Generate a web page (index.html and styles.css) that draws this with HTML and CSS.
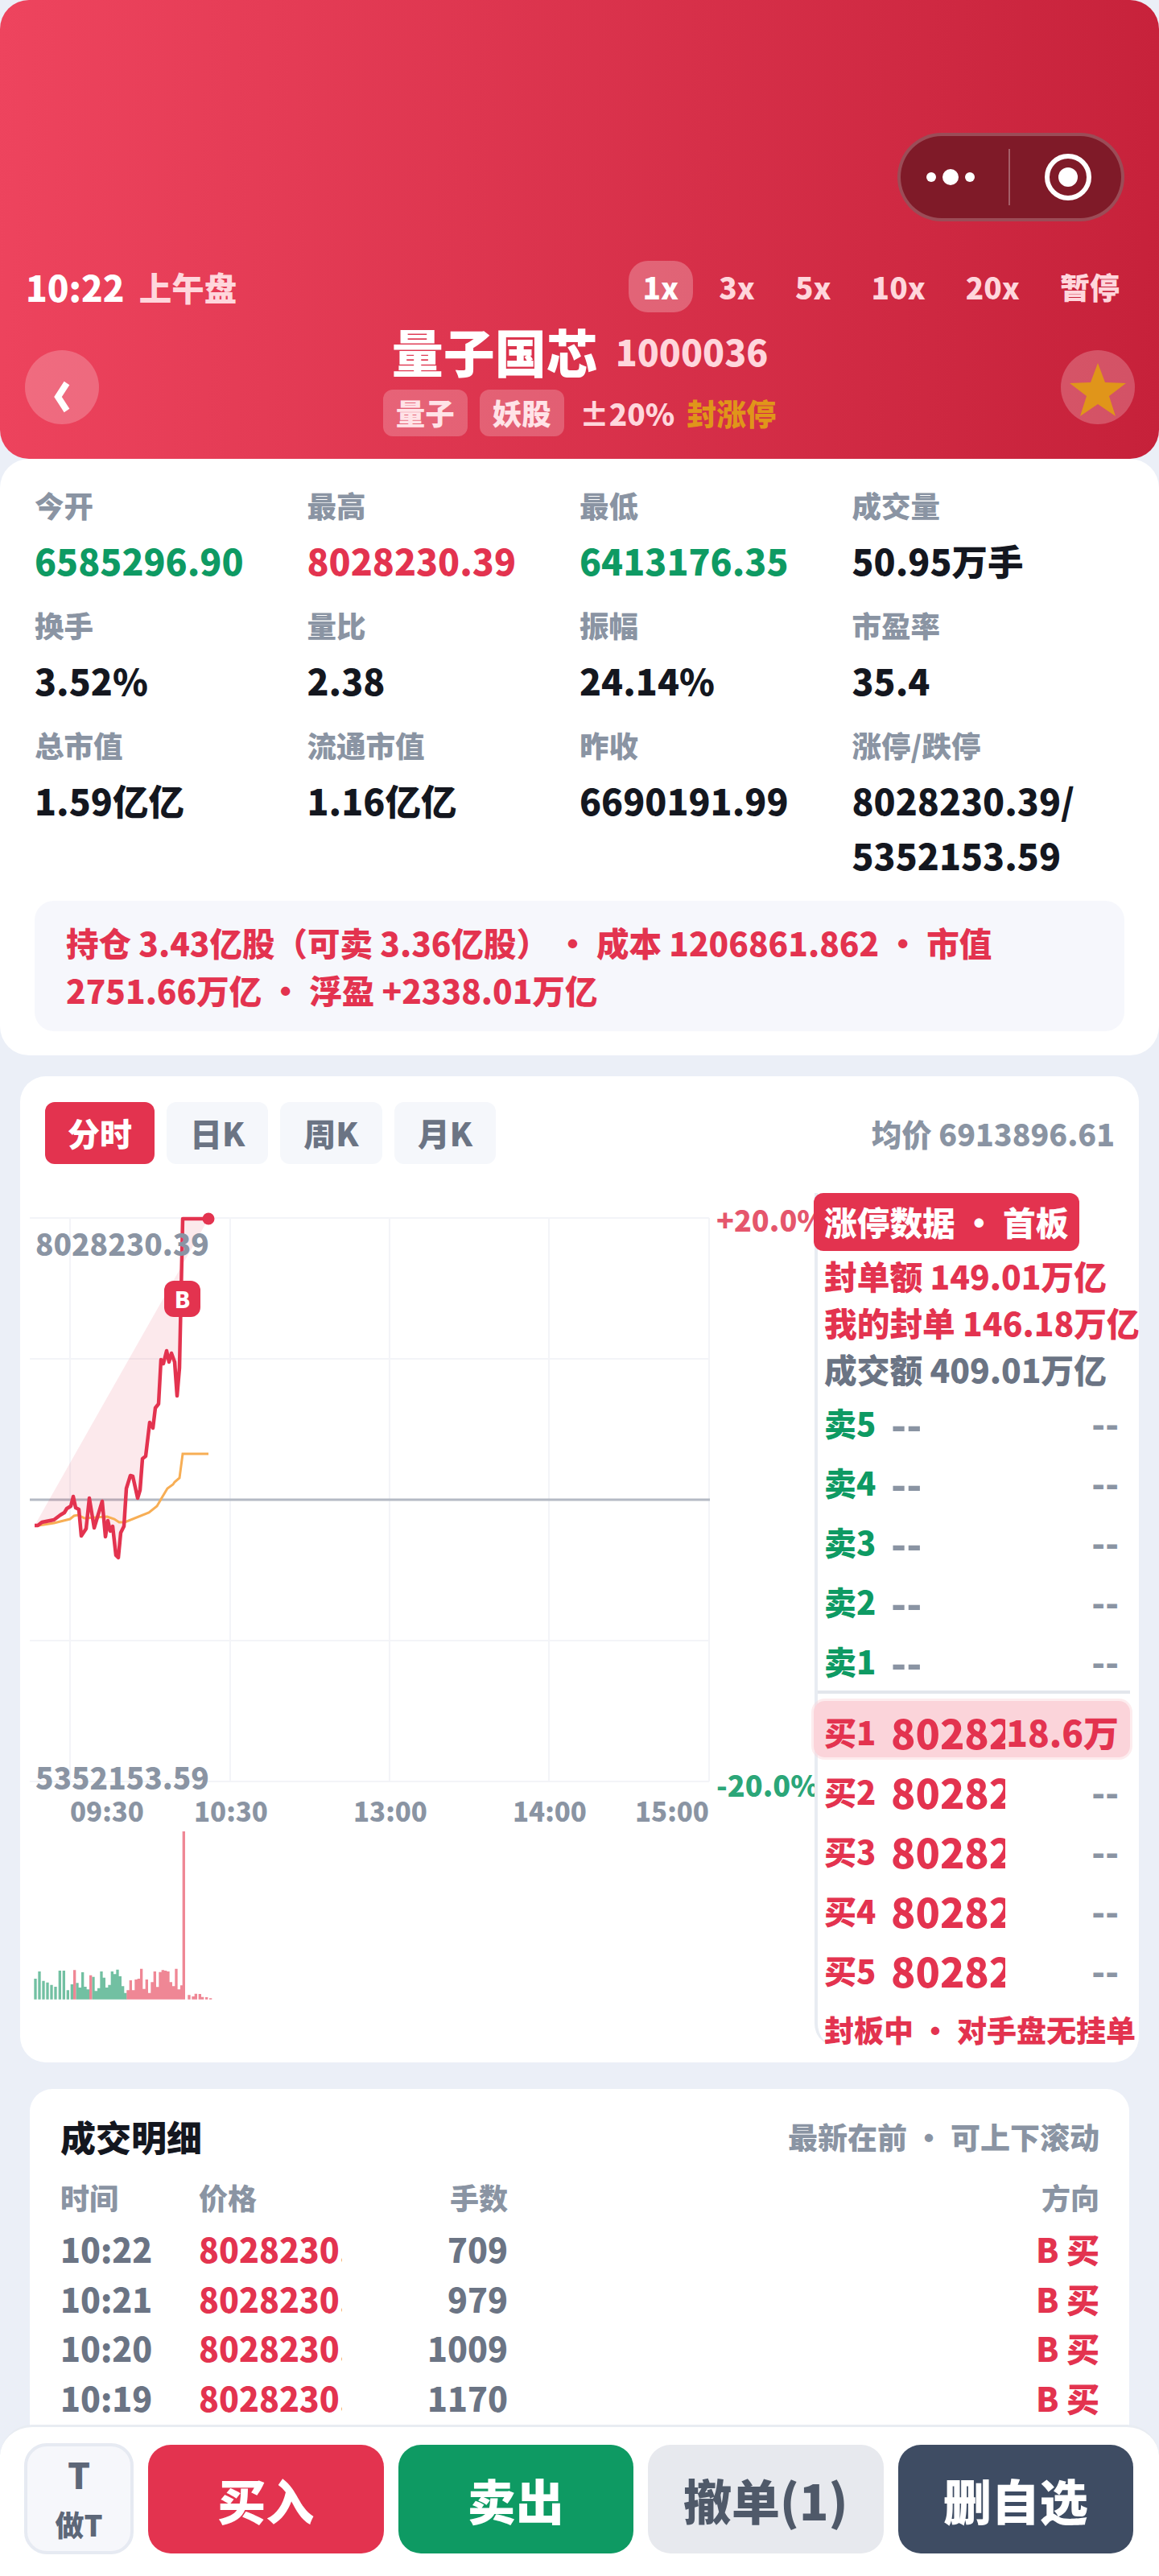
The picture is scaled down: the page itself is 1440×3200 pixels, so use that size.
FILE: index.html
```html
<!DOCTYPE html>
<html lang="zh-CN">
<head>
  <meta charset="UTF-8" />
  <title>量子国芯 1000036</title>
  <link rel="stylesheet" href="styles.css">
</head>
<body>
  <header class="top">
    <div class="capsule">
      <svg class="capsule-dots" width="60" height="24" viewBox="0 0 60 24"><circle cx="6" cy="12" r="6"/><circle cx="30" cy="12" r="10"/><circle cx="54" cy="12" r="6"/></svg>
      <span class="capsule-line"></span>
      <svg class="capsule-ring" width="60" height="60" viewBox="0 0 60 60"><circle class="ring" cx="30" cy="30" r="26"/><circle cx="30" cy="30" r="12"/></svg>
    </div>

    <div class="clock-row">
      <div class="clock"><span class="clock-time">10:22</span><span class="clock-name">上午盘</span></div>
      <div class="speeds">
        <span class="speed active">1x</span>
        <span class="speed">3x</span>
        <span class="speed">5x</span>
        <span class="speed">10x</span>
        <span class="speed">20x</span>
        <span class="speed">暂停</span>
      </div>
    </div>

    <div class="name-row">
      <div class="round-btn back">
        <svg width="30" height="44" viewBox="0 0 30 44"><polyline points="21,5 10,22 21,39"/></svg>
      </div>
      <div class="name-block">
        <div class="name-line"><span class="stock-name">量子国芯</span><span class="stock-code">1000036</span></div>
        <div class="tag-line">
          <span class="tag">量子</span>
          <span class="tag">妖股</span>
          <span class="limit">±20%</span>
          <span class="sealed">封涨停</span>
        </div>
      </div>
      <div class="round-btn fav">
        <svg width="72" height="68" viewBox="0 0 72 68"><polygon points="36,1 45,25 71,26 50,42 58,67 36,52 14,67 22,42 1,26 27,25"/></svg>
      </div>
    </div>
  </header>

  <section class="stats">
    <div class="stat-grid">
      <div><div class="stat-label">今开</div><div class="stat-value green">6585296.90</div></div>
      <div><div class="stat-label">最高</div><div class="stat-value red">8028230.39</div></div>
      <div><div class="stat-label">最低</div><div class="stat-value green">6413176.35</div></div>
      <div><div class="stat-label">成交量</div><div class="stat-value">50.95万手</div></div>
      <div><div class="stat-label">换手</div><div class="stat-value">3.52%</div></div>
      <div><div class="stat-label">量比</div><div class="stat-value">2.38</div></div>
      <div><div class="stat-label">振幅</div><div class="stat-value">24.14%</div></div>
      <div><div class="stat-label">市盈率</div><div class="stat-value">35.4</div></div>
      <div><div class="stat-label">总市值</div><div class="stat-value">1.59亿亿</div></div>
      <div><div class="stat-label">流通市值</div><div class="stat-value">1.16亿亿</div></div>
      <div><div class="stat-label">昨收</div><div class="stat-value">6690191.99</div></div>
      <div><div class="stat-label">涨停/跌停</div><div class="stat-value">8028230.39/<br>5352153.59</div></div>
    </div>
    <div class="position">持仓 3.43亿股（可卖 3.36亿股） · 成本 1206861.862 · 市值 2751.66万亿 · 浮盈 +2338.01万亿</div>
  </section>

  <section class="chart-card">
    <div class="tabs-row">
      <div class="tabs">
        <span class="tab active">分时</span>
        <span class="tab">日K</span>
        <span class="tab">周K</span>
        <span class="tab">月K</span>
      </div>
      <span class="avg-price">均价 6913896.61</span>
    </div>

    <div class="chart-body">
      <div class="chart-left">
        <!-- viewBox uses page pixels so the points read off the screen stay as they are -->
        <svg class="plot" width="975" height="1060" viewBox="37 1483 975 1060">
          <g class="grid">
            <path d="M37 1514H881M37 1689H881M37 2039H881M37 2214H881"/>
            <path d="M87 1514V2214M286 1514V2214M484 1514V2214M682 1514V2214M881 1514V2214"/>
          </g>
          <path class="mid" d="M37 1864H882"/>
          <polygon class="area" points="43,1896 47,1896 52,1892 67,1889 75,1883 80,1880 83,1875 88,1872 91,1860 94,1874 98,1876 101,1909 107,1900 111,1862 117,1899 127,1866 131,1910 134,1890 137,1903 140,1897 144,1933 147,1936 150,1905 154,1897 157,1850 162,1834 165,1835 171,1862 174,1852 177,1813 181,1810 186,1768 190,1775 193,1750 197,1745 200,1690 203,1695 207,1679 210,1693 213,1682 217,1693 220,1735 223,1700 227,1515 259,1515"/>
          <polyline class="avg" points="48,1896 67,1893 87,1888 92,1884 97,1883 105,1887 133,1885 142,1888 148,1892 155,1892 185,1880 195,1872 202,1860 208,1850 215,1845 217,1842 223,1837 227,1807 259,1807"/>
          <polyline class="price" points="43,1896 47,1896 52,1892 67,1889 75,1883 80,1880 83,1875 88,1872 91,1860 94,1874 98,1876 101,1909 107,1900 111,1862 117,1899 127,1866 131,1910 134,1890 137,1903 140,1897 144,1933 147,1936 150,1905 154,1897 157,1850 162,1834 165,1835 171,1862 174,1852 177,1813 181,1810 186,1768 190,1775 193,1750 197,1745 200,1690 203,1695 207,1679 210,1693 213,1682 217,1693 220,1735 223,1700 227,1515 259,1515"/>
          <circle class="dot" cx="259" cy="1515" r="7.5"/>
          <g class="vol" transform="translate(35 2420) scale(.3333)">
            <path class="vol-down" d="M27 194V117M42 194V90M57 194V125M72 194V131M87 194V140M102 194V147M118 194V87M133 194V87M148 194V160M163 194V138M183 194V133M193 194V150M203 194V93M213 194V147M223 194V157M243 194V110M253 194V163M263 194V152M273 194V90M283 194V113M293 194V150M303 194V140M313 194V90M323 194V100M333 194V83M343 194V108M353 194V145M363 194V170"/>
            <path class="vol-up" d="M173 194V85M233 194V104M372 194V160M382 194V123M392 194V160M402 194V120M412 194V117M422 194V80M432 194V155M442 194V120M452 194V170M462 194V130M472 194V90M482 194V148M492 194V92M502 194V85M512 194V87M522 194V90M532 194V130M542 194V145M552 194V80M562 194V157M572 194V142M580 194V-432M600 194V178M615 194V183M625 194V173M640 194V174M650 194V185M665 194V186M680 194V190"/>
          </g>
        </svg>
        <span class="marker">B</span>
        <span class="axis-price high">8028230.39</span>
        <span class="axis-price low">5352153.59</span>
        <span class="axis-pct up">+20.0%</span>
        <span class="axis-pct down">-20.0%</span>
        <span class="axis-time t1">09:30</span>
        <span class="axis-time t2">10:30</span>
        <span class="axis-time t3">13:00</span>
        <span class="axis-time t4">14:00</span>
        <span class="axis-time t5">15:00</span>
      </div>

      <div class="book">
        <div class="book-badge">涨停数据 · 首板</div>
        <div class="book-line red">封单额 149.01万亿</div>
        <div class="book-line red">我的封单 146.18万亿</div>
        <div class="book-line gray">成交额 409.01万亿</div>

        <div class="level"><span class="level-name green">卖5</span><span class="level-price dash">--</span><span class="level-qty dash">--</span></div>
        <div class="level"><span class="level-name green">卖4</span><span class="level-price dash">--</span><span class="level-qty dash">--</span></div>
        <div class="level"><span class="level-name green">卖3</span><span class="level-price dash">--</span><span class="level-qty dash">--</span></div>
        <div class="level"><span class="level-name green">卖2</span><span class="level-price dash">--</span><span class="level-qty dash">--</span></div>
        <div class="level"><span class="level-name green">卖1</span><span class="level-price dash">--</span><span class="level-qty dash">--</span></div>
        <div class="book-divider"></div>
        <div class="level first"><span class="level-name red">买1</span><span class="level-price red">8028230.39</span><span class="level-qty red">18.6万</span></div>
        <div class="level"><span class="level-name red">买2</span><span class="level-price red">8028230.39</span><span class="level-qty dash">--</span></div>
        <div class="level"><span class="level-name red">买3</span><span class="level-price red">8028230.39</span><span class="level-qty dash">--</span></div>
        <div class="level"><span class="level-name red">买4</span><span class="level-price red">8028230.39</span><span class="level-qty dash">--</span></div>
        <div class="level"><span class="level-name red">买5</span><span class="level-price red">8028230.39</span><span class="level-qty dash">--</span></div>
        <div class="book-note">封板中 · 对手盘无挂单</div>
      </div>
    </div>
  </section>

  <section class="trades">
    <div class="trades-head">
      <span class="trades-title">成交明细</span>
      <span class="trades-hint">最新在前 · 可上下滚动</span>
    </div>
    <div class="trade-row trade-labels"><span>时间</span><span>价格</span><span class="qty">手数</span><span class="dir">方向</span></div>
    <div class="trade-row"><span class="when">10:22</span><span class="at">8028230.39</span><span class="qty">709</span><span class="dir">B 买</span></div>
    <div class="trade-row"><span class="when">10:21</span><span class="at">8028230.39</span><span class="qty">979</span><span class="dir">B 买</span></div>
    <div class="trade-row"><span class="when">10:20</span><span class="at">8028230.39</span><span class="qty">1009</span><span class="dir">B 买</span></div>
    <div class="trade-row"><span class="when">10:19</span><span class="at">8028230.39</span><span class="qty">1170</span><span class="dir">B 买</span></div>
  </section>

  <footer class="actions">
    <div class="t-btn"><span class="t-mark">T</span><span class="t-text">做T</span></div>
    <div class="act buy">买入</div>
    <div class="act sell">卖出</div>
    <div class="act cancel">撤单(1)</div>
    <div class="act unfav">删自选</div>
  </footer>
</body>
</html>
```

FILE: styles.css
```css
* {
  box-sizing: border-box;
}

body {
  margin: 0;
  width: 1440px;
  height: 3200px;
  overflow: hidden;
  position: relative;
  font-family: "Noto Sans CJK SC", "Noto Sans", sans-serif;
  font-weight: 900;
  background-color: #ebeff7;
  color: #14171f;
}

.red { color: #e3334f; }
.green { color: #0e9a63; }
.gray { color: #6b7484; }

/* header */
.top {
  position: relative;
  height: 570px;
  padding-top: 324px;
  background: linear-gradient(95deg, #ee445e, #c6213a);
  border-radius: 36px;
  color: white;
}

.capsule {
  position: absolute;
  top: 165px;
  left: 1115px;
  width: 282px;
  height: 110px;
  display: flex;
  align-items: center;
  background-color: #7f1a28;
  border: 4px solid rgba(255,255,255,0.22);
  border-radius: 55px;
}

.capsule svg { fill: white; }
.capsule-dots { margin-left: 32px; }
.capsule-line {
  width: 2px;
  height: 70px;
  margin-left: 42px;
  background-color: rgba(255,255,255,0.3);
}
.capsule-ring { margin-left: 42px; }
.capsule-ring .ring {
  fill: none;
  stroke: white;
  stroke-width: 6;
}

.clock-row {
  display: flex;
  align-items: center;
  justify-content: space-between;
  padding: 0 31px 0 32px;
}

.clock {
  display: flex;
  align-items: center;
  gap: 18px;
}

.clock-time { font-size: 44px; }
.clock-name { font-size: 40.5px; color: #ffd6dc; }

.speeds {
  display: flex;
  gap: 14px;
}

.speed {
  height: 64px;
  line-height: 64px;
  padding: 0 18px;
  border-radius: 24px;
  font-size: 37px;
  color: #ffd6dc;
}

.speed.active {
  background-color: rgba(255,255,255,0.25);
  color: white;
}

.name-row {
  display: flex;
  justify-content: space-between;
  padding: 32px 30px 0 31px;
}

.round-btn {
  width: 92px;
  height: 92px;
  margin-top: 15px;
  display: flex;
  align-items: center;
  justify-content: center;
  background-color: rgba(255,255,255,0.22);
  border-radius: 50%;
}

.round-btn polyline {
  fill: none;
  stroke: white;
  stroke-width: 8;
}

.back { padding-top: 24px; }
.fav { padding-top: 5px; }
.fav svg { fill: #e0951a; }

.name-block {
  display: flex;
  flex-direction: column;
  align-items: center;
}

.name-line {
  display: flex;
  align-items: center;
  gap: 22px;
  height: 78px;
  margin-top: -24px;
}

.stock-name {
  font-size: 64px;
  line-height: 78px;
}

.stock-code {
  font-size: 44.5px;
  color: #ffd6dc;
}

.tag-line {
  display: flex;
  align-items: center;
  height: 58px;
  margin-top: 10px;
  margin-left: -1px;
  font-size: 36.5px;
}

.tag {
  height: 58px;
  line-height: 58px;
  padding: 0 16px;
  margin-right: 15px;
  border-radius: 12px;
  background-color: rgba(255,255,255,0.22);
  color: #ffe3e7;
}

.limit {
  margin-left: 4px;
  font-size: 37px;
  color: #ffd6dc;
}

.sealed {
  margin-left: 15px;
  font-size: 37px;
  color: #e0951a;
}

/* stats */
.stats {
  padding: 34px 43px 30px;
  background-color: white;
  border-radius: 36px;
}

.stat-grid {
  display: grid;
  grid-template-columns: repeat(4, 338.5px);
  row-gap: 23px;
}

.stat-label {
  font-size: 36.5px;
  line-height: 48px;
  color: #8a94a3;
  margin-bottom: 10px;
}

.stat-value {
  font-size: 44.5px;
  line-height: 68px;
}

.position {
  margin-top: 23px;
  padding: 22px 39px;
  background-color: #f6f7fc;
  border-radius: 24px;
  font-size: 40.5px;
  line-height: 59px;
  color: #e3334f;
}

/* chart */
.chart-card {
  height: 1225px;
  margin: 26px 25px 0;
  padding-top: 32px;
  background-color: white;
  border-radius: 32px;
}

.tabs-row {
  display: flex;
  align-items: center;
  justify-content: space-between;
  padding: 0 30px 0 31px;
}

.tabs {
  display: flex;
  gap: 15px;
}

.tab {
  height: 77px;
  line-height: 77px;
  padding: 0 29px;
  border-radius: 12px;
  background-color: #f5f7fb;
  font-size: 40px;
  color: #6b7484;
}

.tab.active {
  padding: 0 28px;
  background-color: #e3334f;
  color: white;
}

.avg-price {
  font-size: 37.5px;
  color: #8a94a3;
}

.chart-body {
  display: flex;
  margin-top: 36px;
  padding-left: 12px;
}

.chart-left {
  position: relative;
  width: 975px;
  height: 1060px;
  overflow: hidden;
  flex-shrink: 0;
}

.plot { display: block; }

.grid path {
  fill: none;
  stroke: #f3f4f8;
  stroke-width: 2;
}

.mid {
  stroke: #b4bac4;
  stroke-width: 3;
}

.area { fill: rgba(227,51,79,0.11); }

.avg {
  fill: none;
  stroke: #f7ae55;
  stroke-width: 3;
}

.price {
  fill: none;
  stroke: #e3334f;
  stroke-width: 4.5;
  stroke-linejoin: round;
}

.dot { fill: #e3334f; }

.vol path {
  fill: none;
  stroke-width: 10;
}

.vol-down { stroke: #72c0a2; }
.vol-up { stroke: #ef8795; }

.marker {
  position: absolute;
  left: 167px;
  top: 109px;
  width: 45px;
  height: 45px;
  line-height: 45px;
  text-align: center;
  background-color: #e3334f;
  border-radius: 12px;
  font-size: 28px;
  color: white;
}

.axis-price {
  position: absolute;
  left: 7px;
  font-size: 37px;
  line-height: 50px;
  color: #8a94a3;
}

.axis-price.high { top: 37px; }
.axis-price.low { top: 700px; }

.axis-pct {
  position: absolute;
  left: 853px;
  font-size: 36px;
  line-height: 50px;
}

.axis-pct.up { top: 7px; color: #e5566c; }
.axis-pct.down { top: 709px; color: #2ba678; }

.axis-time {
  position: absolute;
  top: 745px;
  font-size: 33px;
  line-height: 44px;
  color: #8a94a3;
}

.t1 { left: 50px; }
.t2 { left: 204px; }
.t3 { left: 402px; }
.t4 { left: 600px; }
.t5 { left: 752px; }

/* order book */
.book {
  width: 403px;
  height: 1060px;
  padding-left: 8px;
  padding-right: 11px;
  border-left: 4px solid #e8ecf2;
  border-bottom-left-radius: 28px;
  white-space: nowrap;
}

.book-badge {
  width: 330px;
  height: 72px;
  line-height: 72px;
  margin-left: -13px;
  margin-bottom: 2px;
  padding-left: 13px;
  position: relative;
  background-color: #e3334f;
  border-radius: 12px;
  font-size: 40.7px;
  color: white;
}

.book-line {
  font-size: 40.7px;
  line-height: 58px;
}

.level {
  display: flex;
  align-items: center;
  height: 74px;
}

.level-name {
  width: 83px;
  flex-shrink: 0;
  font-size: 40px;
}

.level-price {
  width: 142px;
  flex-shrink: 0;
  overflow: hidden;
  font-size: 50px;
}

.level-qty {
  flex: 1;
  padding-right: 14px;
  text-align: right;
  font-size: 44px;
}

.dash { color: #8a94a3; }

.book-divider {
  height: 4px;
  background-color: #e3e6ec;
  margin-bottom: 9px;
  margin-left: -8px;
}

.level.first {
  height: 70px;
  margin-left: -13px;
  margin-bottom: 5px;
  padding: 6px 0 0 13px;
  background-color: #fbd4da;
  border-radius: 14px;
  box-shadow: 0 0 0 3px rgba(251,212,218,0.45);
}

.book-note {
  margin-top: 10px;
  font-size: 37px;
  line-height: 54px;
  color: #e3334f;
}

/* trades */
.trades {
  height: 700px;
  margin: 33px 37px 0;
  padding: 29px 37px 0 38px;
  background-color: white;
  border-radius: 28px;
}

.trades-head {
  display: flex;
  align-items: center;
  justify-content: space-between;
  height: 60px;
  margin-bottom: 20px;
}

.trades-title { font-size: 44px; }

.trades-hint {
  font-size: 37px;
  color: #8a94a3;
}

.trade-row {
  display: grid;
  grid-template-columns: 172px 178px 206px 1fr;
  height: 61.5px;
  line-height: 61.5px;
  font-size: 41px;
  color: #6b7484;
}

.trade-labels {
  height: 59px;
  line-height: 50px;
  font-size: 36px;
  color: #8a94a3;
}

.trade-row .at {
  overflow: hidden;
  white-space: nowrap;
  color: #e3334f;
}

.trade-row .qty { text-align: right; }
.trade-row .dir { text-align: right; }
.trade-row:not(.trade-labels) .dir { color: #e3334f; }

/* bottom bar */
.actions {
  position: absolute;
  left: 0;
  right: 0;
  bottom: 0;
  height: 188px;
  display: flex;
  align-items: flex-start;
  gap: 18px;
  padding: 20px 32px 0 30px;
  background-color: white;
  border-top: 3px solid #e8ecf2;
  border-radius: 40px 40px 0 0;
}

.t-btn {
  width: 136px;
  height: 138px;
  flex-shrink: 0;
  display: flex;
  flex-direction: column;
  align-items: center;
  justify-content: center;
  background-color: #f6f7fb;
  border: 4px solid #e6eaf2;
  border-radius: 28px;
  color: #5d6778;
}

.t-mark { font-size: 44px; line-height: 62px; }
.t-text { font-size: 36px; line-height: 62px; }

.act {
  flex: 1;
  height: 135px;
  margin-top: 2px;
  line-height: 135px;
  text-align: center;
  border-radius: 28px;
  font-size: 60px;
  color: white;
}

.buy { background-color: #e3334f; }
.sell { background-color: #0e9a63; }
.cancel { background-color: #e7e9ee; color: #4f5969; }
.unfav { background-color: #3e4c63; }
```
